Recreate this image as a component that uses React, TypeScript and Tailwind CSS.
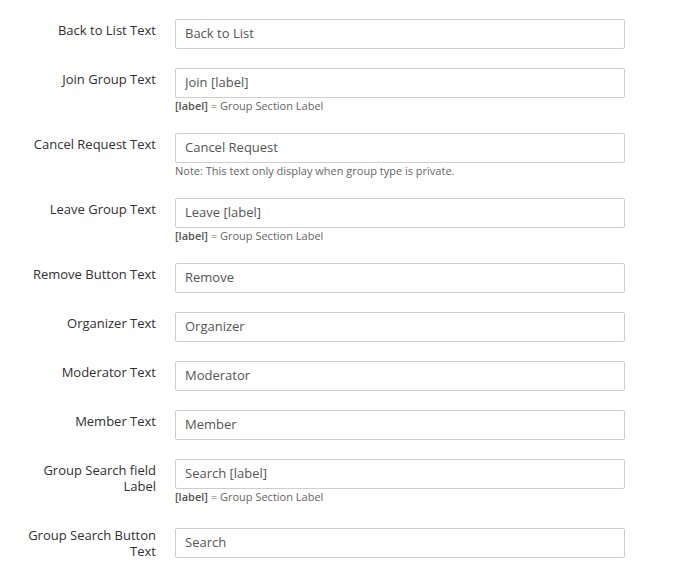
const LabelNote = () => (
  <p className="text-[11px] leading-[16px] text-[#666]">
    <b className="font-semibold text-[#555]">[label]</b> = Group Section Label
  </p>
);

type Row = {
  label: string;
  value: string;
  note?: React.ReactNode;
  pushed?: boolean;
};

const rows: Row[] = [
  { label: "Back to List Text", value: "Back to List" },
  { label: "Join Group Text", value: "Join [label]", note: <LabelNote /> },
  {
    label: "Cancel Request Text",
    value: "Cancel Request",
    note: (
      <p className="text-[11px] leading-[16px] text-[#666]">
        Note: This text only display when group type is private.
      </p>
    ),
  },
  { label: "Leave Group Text", value: "Leave [label]", note: <LabelNote /> },
  { label: "Remove Button Text", value: "Remove" },
  { label: "Organizer Text", value: "Organizer" },
  { label: "Moderator Text", value: "Moderator" },
  { label: "Member Text", value: "Member" },
  { label: "Group Search field Label", value: "Search [label]", note: <LabelNote /> },
  { label: "Group Search Button Text", value: "Search", pushed: true },
];

export default function App() {
  return (
    <div
      className="min-h-[575px] bg-white pt-[19px]"
      style={{ fontFamily: '"Open Sans", "Liberation Sans", sans-serif' }}
    >
      {rows.map((row) => (
        <div key={row.label} className="mb-[19px] flex">
          <label className="ml-[15px] w-[141px] shrink-0 pt-[3px] text-right text-[13px] leading-[16px] text-[#303030]">
            {row.label}
          </label>
          <div className={row.pushed ? "ml-[19px] mt-[4px] w-[450px]" : "ml-[19px] w-[450px]"}>
            <input
              readOnly
              defaultValue={row.value}
              className="block h-[30px] w-full rounded-[2px] border border-[#cfcfcf] bg-white px-[9px] pb-[2px] text-[13px] text-[#555] outline-none"
            />
            {row.note}
          </div>
        </div>
      ))}
    </div>
  );
}
